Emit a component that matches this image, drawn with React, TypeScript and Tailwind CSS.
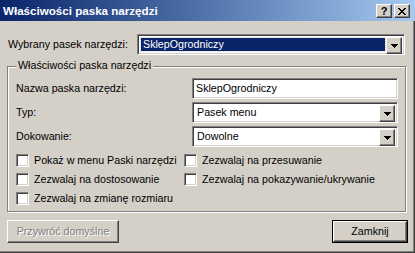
import React from "react"

const sunken =
  "border border-t-[#808080] border-l-[#808080] border-b-white border-r-white shadow-[inset_1px_1px_0_#404040,inset_-1px_-1px_0_#d4d0c8]"
const raised =
  "border border-t-white border-l-white border-b-[#404040] border-r-[#404040] shadow-[inset_-1px_-1px_0_#808080]"

function Arrow() {
  return (
    <svg width="7" height="4" viewBox="0 0 7 4" shapeRendering="crispEdges">
      <path d="M0 0h7v1H0zM1 1h5v1H1zM2 2h3v1H2zM3 3h1v1H3z" fill="#000" />
    </svg>
  )
}

function DropButton() {
  return (
    <div className={`w-[16px] h-[17px] bg-[#d4d0c8] flex items-center justify-center ${raised}`}>
      <Arrow />
    </div>
  )
}

function Combo({ value, selected, width }: { value: string; selected?: boolean; width: string }) {
  return (
    <div className={`${width} h-[21px] bg-white flex items-stretch p-[2px] ${sunken}`}>
      <div className="flex-1 flex items-center pl-px pr-px">
        {selected ? (
          <div className="w-full h-[13px] bg-[#0a246a] text-white outline-1 outline-dotted outline-[#d4d0c8] flex items-center pl-[2px] leading-none">
            {value}
          </div>
        ) : (
          <span className="pl-[1px] leading-none">{value}</span>
        )}
      </div>
      <DropButton />
    </div>
  )
}

function Check({ label }: { label: string }) {
  return (
    <div className="flex items-center gap-[5px] h-[13px]">
      <div className={`w-[13px] h-[13px] bg-white shrink-0 ${sunken}`} />
      <span className="leading-none">{label}</span>
    </div>
  )
}

export default function App() {
  return (
    <div className="w-[415px] h-[253px] bg-[#d4d0c8] text-black text-[10.7px] font-['Liberation_Sans',Arial,sans-serif] shadow-[inset_-1px_-1px_0_#404040,inset_-2px_-2px_0_#808080] overflow-hidden">
      <div className="h-[21px] bg-gradient-to-r from-[#0a246a] to-[#a6caf0] flex items-center justify-between pl-[3px] pr-[5px]">
        <span className="text-white font-bold text-[11.6px] leading-none">Właściwości paska narzędzi</span>
        <div className="flex gap-[2px] mt-[1px]">
          <div className={`w-[16px] h-[14px] bg-[#d4d0c8] flex items-center justify-center font-bold text-[11px] leading-none ${raised}`}>
            ?
          </div>
          <div className={`w-[16px] h-[14px] bg-[#d4d0c8] flex items-center justify-center ${raised}`}>
            <svg width="8" height="7" viewBox="0 0 8 7" shapeRendering="crispEdges">
              <path d="M0 0h2v1H0zM6 0h2v1H6zM1 1h2v1H1zM5 1h2v1H5zM2 2h4v1H2zM3 3h2v1H3zM2 4h4v1H2zM1 5h2v1H1zM5 5h2v1H5zM0 6h2v1H0zM6 6h2v1H6z" fill="#000" />
            </svg>
          </div>
        </div>
      </div>

      <div className="flex items-center mt-[13px] pl-[8px]">
        <span className="w-[129px] leading-none">Wybrany pasek narzędzi:</span>
        <Combo value="SklepOgrodniczy" selected width="w-[268px]" />
      </div>

      <div className="relative ml-[7px] mt-[11px] w-[399px] h-[146px] border border-[#808080] shadow-[inset_1px_1px_0_#fff,1px_1px_0_#fff]">
        <span className="absolute left-[8px] top-[-7px] bg-[#d4d0c8] px-[2px] leading-none">Właściwości paska narzędzi</span>
        <div className="flex flex-col gap-[3px] mt-[11px] pl-[8px]">
          <div className="flex items-center h-[21px]">
            <span className="w-[176px] leading-none">Nazwa paska narzędzi:</span>
            <div className={`w-[206px] h-[21px] bg-white flex items-center pl-[3px] leading-none ${sunken}`}>SklepOgrodniczy</div>
          </div>
          <div className="flex items-center h-[21px]">
            <span className="w-[176px] leading-none">Typ:</span>
            <Combo value="Pasek menu" width="w-[206px]" />
          </div>
          <div className="flex items-center h-[21px]">
            <span className="w-[176px] leading-none">Dokowanie:</span>
            <Combo value="Dowolne" width="w-[206px]" />
          </div>
        </div>
        <div className="grid grid-cols-[168px_1fr] gap-y-[6px] mt-[7px] pl-[8px]">
          <Check label="Pokaż w menu Paski narzędzi" />
          <Check label="Zezwalaj na przesuwanie" />
          <Check label="Zezwalaj na dostosowanie" />
          <Check label="Zezwalaj na pokazywanie/ukrywanie" />
          <Check label="Zezwalaj na zmianę rozmiaru" />
        </div>
      </div>

      <div className="flex justify-between mt-[8px] pl-[7px] pr-[7px]">
        <div className={`w-[112px] h-[23px] bg-[#d4d0c8] flex items-center justify-center text-[#808080] [text-shadow:1px_1px_0_#fff] leading-none ${raised}`}>
          Przywróć domyślne
        </div>
        <div className="w-[76px] h-[23px] border border-black">
          <div className={`w-full h-full bg-[#d4d0c8] flex items-center justify-center leading-none ${raised}`}>Zamknij</div>
        </div>
      </div>
    </div>
  )
}
